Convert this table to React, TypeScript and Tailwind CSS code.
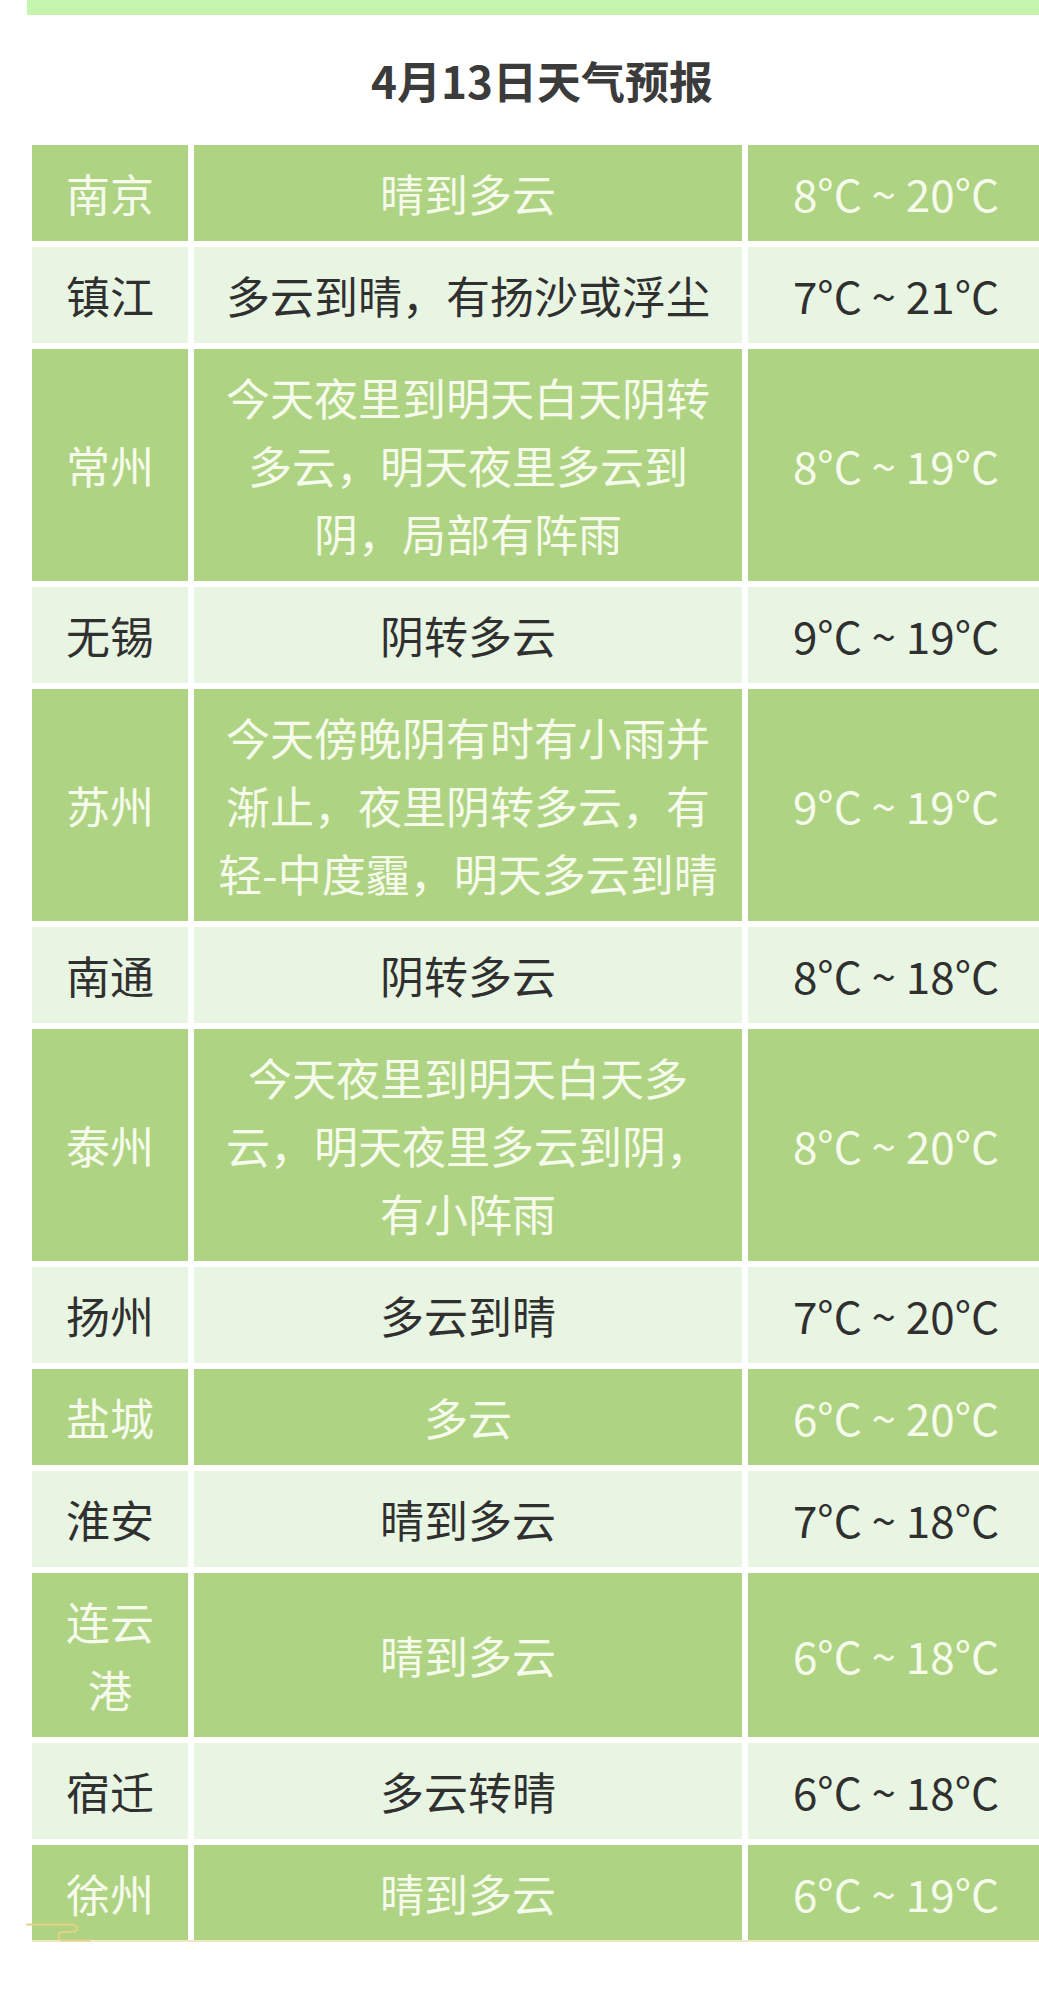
import React from 'react';

type Row = {
  city: string;
  weather: string;
  temp: string;
};

const rows: Row[] = [
  { city: '南京', weather: '晴到多云', temp: '8°C ~ 20°C' },
  { city: '镇江', weather: '多云到晴，有扬沙或浮尘', temp: '7°C ~ 21°C' },
  { city: '常州', weather: '今天夜里到明天白天阴转多云，明天夜里多云到阴，局部有阵雨', temp: '8°C ~ 19°C' },
  { city: '无锡', weather: '阴转多云', temp: '9°C ~ 19°C' },
  { city: '苏州', weather: '今天傍晚阴有时有小雨并渐止，夜里阴转多云，有轻-中度霾，明天多云到晴', temp: '9°C ~ 19°C' },
  { city: '南通', weather: '阴转多云', temp: '8°C ~ 18°C' },
  { city: '泰州', weather: '今天夜里到明天白天多云，明天夜里多云到阴，有小阵雨', temp: '8°C ~ 20°C' },
  { city: '扬州', weather: '多云到晴', temp: '7°C ~ 20°C' },
  { city: '盐城', weather: '多云', temp: '6°C ~ 20°C' },
  { city: '淮安', weather: '晴到多云', temp: '7°C ~ 18°C' },
  { city: '连云港', weather: '晴到多云', temp: '6°C ~ 18°C' },
  { city: '宿迁', weather: '多云转晴', temp: '6°C ~ 18°C' },
  { city: '徐州', weather: '晴到多云', temp: '6°C ~ 19°C' },
];

function ForecastRow({ row, dark }: { row: Row; dark: boolean }) {
  // alternating rows: solid green with pale text, pale green with dark text
  const cell = dark
    ? 'bg-[#aed483] text-[#f6fbec]'
    : 'bg-[#e9f5e3] text-[#303030]';

  return (
    <div className="grid grid-cols-[156px_548px_296px] gap-x-[6px]">
      <div className={`${cell} flex items-center justify-center text-center px-[14px] py-[14px]`}>
        {row.city}
      </div>
      <div className={`${cell} flex items-center justify-center text-center px-[20px] py-[14px] [text-spacing-trim:space-all]`}>
        {row.weather}
      </div>
      <div className={`${cell} flex items-center justify-center text-center px-[10px] py-[14px]`}>
        {row.temp}
      </div>
    </div>
  );
}

export default function App() {
  return (
    <div
      className="w-[1039px] h-[1991px] overflow-hidden bg-white"
      style={{ fontFamily: '"Noto Sans CJK SC", "Noto Sans", sans-serif' }}
    >
      <div className="ml-[27px] w-[1030px]">
        {/* Top accent bar */}
        <div className="h-[15px] bg-[#c4f4ae]" />

        {/* Title */}
        <h1 className="h-[130px] flex items-center justify-center text-[44px] leading-none font-bold text-[#3b3b3b]">
          4月13日天气预报
        </h1>

        {/* Table */}
        <div className="relative ml-[5px] w-[1012px] flex flex-col gap-[6px] text-[44px] leading-[68px]">
          {rows.map((row, i) => (
            <ForecastRow key={row.city} row={row} dark={i % 2 === 0} />
          ))}

          {/* Bottom decoration */}
          <div className="absolute left-0 right-0 bottom-[-1px] h-[2px] bg-[#f1e7c2]" />
          <svg
            className="absolute left-[-6px] bottom-[-3px]"
            width="64"
            height="24"
            viewBox="0 0 64 24"
            fill="none"
          >
            <path
              d="M1 4.5 H43 Q51 4.5 51 8.5 Q51 12 44 12 H38 Q32.5 12 32.5 16 Q32.5 20.5 38 20.5 H64"
              stroke="#e6cf86"
              strokeWidth="2"
              strokeLinecap="round"
            />
          </svg>
        </div>
      </div>
    </div>
  );
}
